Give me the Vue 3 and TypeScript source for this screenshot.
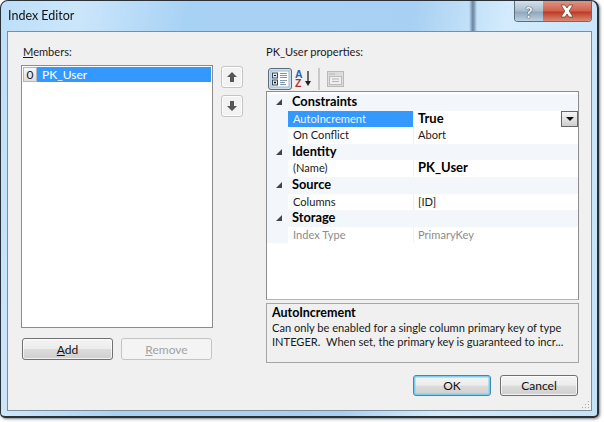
<script setup lang="ts">
interface Row { name: string; value: string; selected?: boolean; strong?: boolean; muted?: boolean }
interface Group { title: string; rows: Row[] }
const groups: Group[] = [
  { title: 'Constraints', rows: [
    { name: 'AutoIncrement', value: 'True', selected: true, strong: true },
    { name: 'On Conflict', value: 'Abort' } ] },
  { title: 'Identity', rows: [ { name: '(Name)', value: 'PK_User', strong: true } ] },
  { title: 'Source', rows: [ { name: 'Columns', value: '[ID]' } ] },
  { title: 'Storage', rows: [ { name: 'Index Type', value: 'PrimaryKey', muted: true } ] },
]
</script>

<template>
  <div class="page">
    <div class="window">
      <div class="streak"></div>
      <header class="titlebar">
        <span class="title">Index Editor</span>
        <div class="caption">
          <span class="cap qmark">?</span>
          <span class="cap close">
            <svg width="20" height="14" viewBox="0 0 20 14"><path d="M4 1h4l2 3 2-3h4l-3.800 6 3.800 6h-4l-2-3-2 3H4l3.800-6z" fill="#fff" stroke="#7a4038" stroke-width=".8"/></svg>
          </span>
        </div>
      </header>
      <main class="client">
        <section class="left">
          <div class="label members"><u>M</u>embers:</div>
          <div class="list">
            <div class="item"><span class="num">0</span><span class="itemtext">PK_User</span></div>
          </div>
          <div class="leftbtns">
            <button class="btn"><u>A</u>dd</button>
            <button class="btn off"><u>R</u>emove</button>
          </div>
        </section>
        <section class="arrows">
          <button class="arrow"><svg width="12" height="12" viewBox="0 0 12 12"><path d="M6 1l5 5H8v5H4V6H1z" fill="#555"/></svg></button>
          <button class="arrow"><svg width="12" height="12" viewBox="0 0 12 12"><path d="M6 11L1 6h3V1h4v5h3z" fill="#555"/></svg></button>
        </section>
        <section class="right">
          <div class="label">PK_User properties:</div>
          <div class="toolbar">
            <span class="tool">
              <svg width="20" height="18" viewBox="0 0 20 18">
                <rect x="1" y="1" width="18" height="16" fill="#fff" stroke="#9db4c8"/>
                <rect x="2.500" y="3" width="5" height="5" fill="#dfe8f2" stroke="#33475b"/>
                <rect x="2.500" y="10" width="5" height="5" fill="#dfe8f2" stroke="#33475b"/>
                <path d="M4 5.500h2M4 12.500h2M5 11.500v2" stroke="#111"/>
                <path d="M10 3.500h7M10 5.500h7M10 7.500h7M10 10.500h7M10 12.500h5M10 14.500h6" stroke="#8296aa"/>
              </svg>
            </span>
            <span class="az"><i class="a">A</i><i class="z">Z</i></span>
            <svg class="sortarrow" width="6" height="16" viewBox="0 0 6 16"><path d="M3 0v12" stroke="#222" stroke-width="1.300"/><path d="M0 10h6l-3 5z" fill="#222"/></svg>
            <span class="sep"></span>
            <svg class="pages" width="17" height="16" viewBox="0 0 17 16">
              <rect x=".5" y=".5" width="16" height="15" fill="#dcdcdc" stroke="#b9b9b9"/>
              <rect x="2.500" y="5.500" width="12" height="8" fill="#eee" stroke="#bdbdbd"/>
              <path d="M2 3h6M5 8h7M5 10.500h7" stroke="#b5b5b5"/>
            </svg>
          </div>
          <div class="grid">
            <template v-for="g in groups" :key="g.title">
              <div class="ghead"><span class="tri"></span><b>{{ g.title }}</b></div>
              <div v-for="r in g.rows" :key="r.name" class="grow" :class="{ muted: r.muted }">
                <span class="pname" :class="{ sel: r.selected }">{{ r.name }}</span>
                <span class="pval" :class="{ strong: r.strong }">{{ r.value }}</span>
                <span v-if="r.selected" class="drop"><i></i></span>
              </div>
            </template>
          </div>
          <div class="desc">
            <b>AutoIncrement</b>
            <p>Can only be enabled for a single column primary key of type<br>INTEGER.&nbsp; When set, the primary key is guaranteed to incr...</p>
          </div>
          <div class="okrow">
            <button class="btn ok">OK</button>
            <button class="btn cancel">Cancel</button>
          </div>
        </section>
        <svg class="grip" width="8" height="8" viewBox="0 0 8 8"><path d="M6 0h1v1H6zM3 3h1v1H3zM6 3h1v1H6zM0 6h1v1H0zM3 6h1v1H3zM6 6h1v1H6z" fill="#a9a9a9"/></svg>
      </main>
    </div>
  </div>
</template>

<style scoped>
.page { width: 604px; height: 422px; background: #fff; overflow: hidden; font-family: Lato, "Open Sans", sans-serif; font-size: 11.100px; color: #1a1a1a; }
.window {
  position: relative; width: 599px; height: 418px; box-sizing: border-box; overflow: hidden;
  border: 2px solid #2a3038; border-top-width: 1px; border-left-width: 1px; border-radius: 8px 8px 5px 5px;
  background: linear-gradient(100deg, #bcdff8 0%, #cbe6fb 12%, #a8d2f4 28%, #a8d0f2 62%, #d3ebfc 76%, #c3e2f8 100%);
  box-shadow: 1px 1px 3px rgba(0,0,0,.5);
  filter: blur(.35px);
}
.streak { position: absolute; left: 468px; top: 0; width: 8px; height: 30px; background: linear-gradient(90deg, transparent, #6f88a4 45%, #7b93ae 60%, transparent); }
.titlebar { position: relative; height: 30px; display: flex; justify-content: space-between; align-items: flex-start; padding: 0 5px 0 7px; }
.title { margin-top: 7px; font-size: 12.500px; color: #111; }
.caption { display: flex; height: 20px; border: 1px solid #5f6e7e; border-top: 0; border-radius: 0 0 4px 4px; overflow: hidden; }
.cap { display: flex; align-items: center; justify-content: center; height: 100%; }
.qmark { width: 28px; font-weight: 700; font-size: 16px; color: #eef4f9; text-shadow: 0 0 1px #333, 0 0 1px #333; background: linear-gradient(#d5e0ea, #a9bccd 50%, #8ea7bd 55%, #bdd0de); }
.close { width: 48px; background: linear-gradient(#e09484, #d0604c 50%, #bc3a26 55%, #da8a70); }
.client { position: relative; width: 585px; height: 380px; margin-left: 6px; box-sizing: border-box; background: #f0f0f0; border: 1px solid #7f8c9a; display: flex; padding: 13px 0 0 13px; }
.label { height: 20px; line-height: 14px; font-size: 11.100px; }
.members { padding-left: 2px; }
.left { width: 192px; display: flex; flex-direction: column; }
.list { height: 263px; box-sizing: border-box; background: #fff; border: 1px solid #8c8c8c; padding: 1px; }
.item { display: flex; height: 15px; line-height: 15px; font-size: 12px; }
.num { width: 14px; text-align: center; background: linear-gradient(#f7f7f7, #dedede); border: 1px solid #b5b5b5; line-height: 13px; box-sizing: border-box; }
.itemtext { flex: 1; background: #3399ff; color: #fff; padding-left: 5px; }
.leftbtns { display: flex; justify-content: space-between; margin-top: 10px; padding: 0 1px; }
.btn { font: inherit; font-size: 12px; color: #111; padding: 0; height: 22px; width: 91px; border: 1px solid #707070; border-radius: 3px; background: linear-gradient(#f4f4f4 0%, #ececec 48%, #dcdcdc 52%, #cfcfcf 100%); box-shadow: inset 0 0 0 1px rgba(255,255,255,.7); }
.btn.off { color: #a3a3a3; border-color: #c4c4c4; background: #f4f4f4; box-shadow: none; }
.arrows { width: 22px; margin: 21px 0 0 8px; display: flex; flex-direction: column; gap: 7px; }
.arrow { width: 22px; height: 22px; padding: 0; display: flex; align-items: center; justify-content: center; background: #f2f2f2; border: 1px solid #c4c4c4; border-radius: 3px; box-shadow: inset 0 0 0 1px #fff; }
.right { width: 313px; margin-left: 23px; display: flex; flex-direction: column; }
.toolbar { height: 23px; margin-top: 2px; display: flex; align-items: center; padding-left: 2px; box-sizing: border-box; }
.tool { width: 24px; height: 22px; box-sizing: border-box; display: flex; align-items: center; justify-content: center; border: 1px solid #5d6a78; border-radius: 3px; background: #cfe0ee; }
.az { display: flex; flex-direction: column; width: 10px; margin-left: 3px; font-weight: 700; font-size: 10.500px; line-height: 9px; }
.az i { font-style: normal; font-family: "Liberation Sans", sans-serif; }
.a { color: #2f5fb0; } .z { color: #b03030; }
.sep { width: 2px; height: 22px; margin-left: 7px; background: #c9c9c9; }
.pages { margin-left: 7px; }
.grid { height: 209px; box-sizing: border-box; margin-top: 1px; background: #fff; border: 1px solid #8c8c8c; border-bottom-color: #b5b5b5; padding-top: 2px; }
.ghead { height: 16.600px; box-sizing: border-box; padding-bottom: 2px; line-height: 14.600px; display: flex; align-items: center; background: #f3f6fb; font-size: 12.800px; color: #000; }
.tri { width: 0; height: 0; margin: 2px 10px 0 9px; border-style: solid; border-width: 0 0 6px 6px; border-color: transparent transparent #444 transparent; }
.grow { position: relative; display: flex; height: 16.600px; line-height: 16.600px; background: linear-gradient(90deg, #f3f6fb 21px, #fff 21px); }
.pname { width: 126px; margin-left: 21px; padding-left: 5px; box-sizing: border-box; border-right: 1px solid #eef1f6; }
.pname.sel { background: #3399ff; color: #eaf4ff; }
.pval { padding-left: 4px; }
.pval.strong { font-weight: 700; font-size: 13px; color: #000; line-height: 15px; }
.muted { color: #8c8c8c; }
.drop { position: absolute; right: 0; top: 0; width: 17px; height: 16px; box-sizing: border-box; border: 1px solid #666; background: linear-gradient(#f6f6f6, #cfcfcf); display: flex; align-items: center; justify-content: center; }
.drop i { border-style: solid; border-width: 4px 4px 0; border-color: #111 transparent transparent; }
.desc { height: 60px; box-sizing: border-box; margin-top: 3px; border: 1px solid #a6a6a6; padding: 2px 5px; line-height: 14.500px; background: #f0f0f0; white-space: nowrap; overflow: hidden; }
.desc b { font-size: 12.500px; color: #000; }
.desc p { margin: 0; }
.okrow { display: flex; justify-content: flex-end; gap: 9px; margin-top: 12px; padding-right: 1px; }
.ok, .cancel { width: 78px; height: 21px; }
.ok { border-color: #3c89b8; box-shadow: inset 0 0 0 1.500px #7fd0ee; }
.grip { position: absolute; right: 1px; bottom: 1px; }
</style>
